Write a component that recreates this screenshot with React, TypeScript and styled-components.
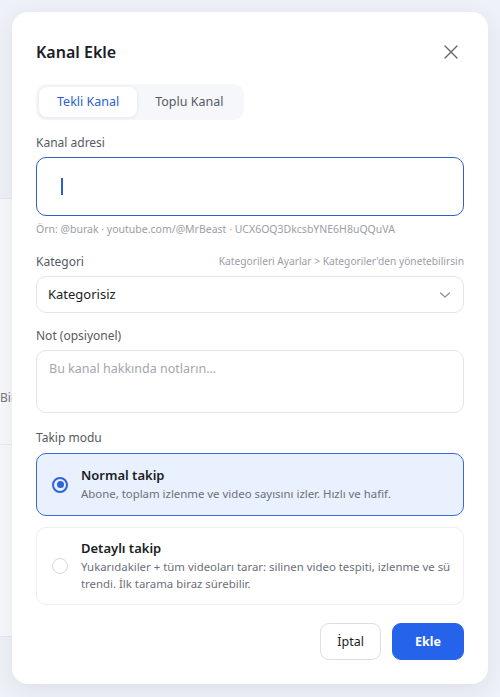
import React from 'react';
import styled, { createGlobalStyle } from 'styled-components';

const GlobalStyle = createGlobalStyle`
  html, body {
    margin: 0;
    padding: 0;
    background: #eef1f7;
    font-family: "Noto Sans", "Open Sans", sans-serif;
    line-height: 1.3;
  }
  #root {
    position: relative;
    width: 500px;
    height: 697px;
    overflow: hidden;
  }
`;

const Page = styled.div`
  padding-top: 198px;
`;

const GhostCard = styled.div`
  width: 300px;
  margin-left: -120px;
  background: #f7f8fb;
  border-top: 1px solid #e6e8ee;
  border-bottom: 1px solid #e6e8ee;
`;

const GhostRow = styled.div<{ $h: number }>`
  height: ${p => p.$h}px;
  box-sizing: border-box;
  border-bottom: 1px solid #e9ebf0;
  padding: 191px 0 0 120px;
  font-size: 12px;
  color: #777;
  &:last-child {
    border-bottom: none;
  }
`;

const Overlay = styled.div`
  position: absolute;
  inset: 0;
  padding: 12px;
  display: flex;
  align-items: flex-start;
`;

const Modal = styled.div`
  width: 476px;
  box-sizing: border-box;
  background: #fff;
  border-radius: 16px;
  box-shadow: 0 6px 24px rgba(30, 40, 80, 0.08);
  padding: 24px;
  display: flex;
  flex-direction: column;
`;

const Header = styled.div`
  display: flex;
  align-items: center;
  justify-content: space-between;
  height: 32px;
`;

const Title = styled.h2`
  margin: 0;
  font-size: 16px;
  font-weight: 600;
  color: #1a1d24;
`;

const CloseButton = styled.button`
  border: none;
  background: none;
  padding: 0;
  width: 20px;
  height: 20px;
  display: flex;
  align-items: center;
  justify-content: center;
  margin-right: 3px;
`;

const Tabs = styled.div`
  margin-top: 16px;
  align-self: flex-start;
  display: flex;
  padding: 3px;
  background: #f5f7fb;
  border-radius: 10px;
`;

const Tab = styled.div<{ $active?: boolean }>`
  height: 30px;
  padding: 0 18px;
  display: flex;
  align-items: center;
  font-size: 12.5px;
  border-radius: 8px;
  color: ${p => (p.$active ? '#2b5fd0' : '#555a63')};
  background: ${p => (p.$active ? '#fff' : 'transparent')};
  box-shadow: ${p => (p.$active ? '0 1px 4px rgba(20,30,60,0.08)' : 'none')};
`;

const Field = styled.div<{ $top: number }>`
  margin-top: ${p => p.$top}px;
  display: flex;
  flex-direction: column;
`;

const LabelRow = styled.div<{ $gap?: number }>`
  display: flex;
  justify-content: space-between;
  align-items: center;
  height: 16px;
  margin-bottom: ${p => p.$gap ?? 6}px;
`;

const Label = styled.label`
  font-size: 12px;
  color: #555a63;
`;

const SideHint = styled.span`
  font-size: 10.2px;
  color: #9a9ea6;
`;

const AddressBox = styled.div`
  height: 59px;
  box-sizing: border-box;
  border: 1px solid #2f62c9;
  border-radius: 10px;
  display: flex;
  align-items: center;
  padding-left: 24px;
`;

const Caret = styled.span`
  width: 1.5px;
  height: 17px;
  background: #2b5fd0;
`;

const Hint = styled.div`
  margin-top: 7px;
  height: 14px;
  font-size: 10.5px;
  color: #9a9ea6;
`;

const SelectBox = styled.div`
  height: 37px;
  box-sizing: border-box;
  border: 1px solid #e3e5ea;
  border-radius: 10px;
  display: flex;
  align-items: center;
  justify-content: space-between;
  padding: 0 12px 0 11px;
  font-size: 13px;
  color: #1a1d24;
`;

const NoteBox = styled.div`
  height: 63px;
  box-sizing: border-box;
  border: 1px solid #e3e5ea;
  border-radius: 10px;
  padding: 10px 12px;
  font-size: 12.5px;
  color: #a3a7ae;
`;

const Options = styled.div`
  display: flex;
  flex-direction: column;
  gap: 11px;
`;

const Option = styled.div<{ $selected?: boolean; $h: number }>`
  height: ${p => p.$h}px;
  box-sizing: border-box;
  border: 1px solid ${p => (p.$selected ? '#3a6ad8' : '#eceef2')};
  background: ${p => (p.$selected ? '#eaf1fe' : '#fff')};
  border-radius: 10px;
  display: flex;
  align-items: center;
  gap: 13px;
  padding: 0 12px 0 15px;
`;

const Radio = styled.span<{ $checked?: boolean }>`
  flex: none;
  width: 16px;
  height: 16px;
  box-sizing: border-box;
  border-radius: 50%;
  border: ${p => (p.$checked ? '2px solid #2b63e0' : '1.5px solid #d4d7dd')};
  display: flex;
  align-items: center;
  justify-content: center;
  &::after {
    content: '';
    display: ${p => (p.$checked ? 'block' : 'none')};
    width: 7px;
    height: 7px;
    border-radius: 50%;
    background: #2b63e0;
  }
`;

const OptionText = styled.div`
  display: flex;
  flex-direction: column;
  min-width: 0;
`;

const OptionTitle = styled.div`
  font-size: 13px;
  font-weight: 600;
  color: #1a1d24;
  margin-bottom: 1px;
`;

const OptionDesc = styled.div`
  font-size: 11.4px;
  line-height: 17px;
  color: #6b7079;
  white-space: pre;
  overflow: hidden;
`;

const Footer = styled.div`
  margin-top: 18px;
  display: flex;
  justify-content: flex-end;
  gap: 11px;
`;

const Button = styled.button<{ $primary?: boolean }>`
  height: 37px;
  box-sizing: border-box;
  border-radius: 9px;
  font-family: inherit;
  font-size: 12.5px;
  padding: 0 ${p => (p.$primary ? 22 : 16)}px;
  border: 1px solid ${p => (p.$primary ? '#2563eb' : '#dcdfe4')};
  background: ${p => (p.$primary ? '#2563eb' : '#fff')};
  color: ${p => (p.$primary ? '#fff' : '#1a1d24')};
  font-weight: ${p => (p.$primary ? 700 : 400)};
`;

export default function App() {
  return (
    <>
      <GlobalStyle />
      <Page>
        <GhostCard>
          <GhostRow $h={246}>Bir</GhostRow>
          <GhostRow $h={100} />
        </GhostCard>
      </Page>
      <Overlay>
        <Modal>
          <Header>
            <Title>Kanal Ekle</Title>
            <CloseButton aria-label="Kapat">
              <svg width="14" height="14" viewBox="0 0 14 14" fill="none" stroke="#666" strokeWidth="1.4" strokeLinecap="round">
                <path d="M1 1L13 13M13 1L1 13" />
              </svg>
            </CloseButton>
          </Header>

          <Tabs>
            <Tab $active>Tekli Kanal</Tab>
            <Tab>Toplu Kanal</Tab>
          </Tabs>

          <Field $top={15}>
            <LabelRow>
              <Label>Kanal adresi</Label>
            </LabelRow>
            <AddressBox>
              <Caret />
            </AddressBox>
            <Hint>Örn: @burak · youtube.com/@MrBeast · UCX6OQ3DkcsbYNE6H8uQQuVA</Hint>
          </Field>

          <Field $top={17}>
            <LabelRow>
              <Label>Kategori</Label>
              <SideHint>Kategorileri Ayarlar &gt; Kategoriler'den yönetebilirsin</SideHint>
            </LabelRow>
            <SelectBox>
              <span>Kategorisiz</span>
              <svg width="12" height="8" viewBox="0 0 12 8" fill="none" stroke="#8a8f98" strokeWidth="1.2" strokeLinecap="round" strokeLinejoin="round">
                <path d="M1.5 2L6 6L10.5 2" />
              </svg>
            </SelectBox>
          </Field>

          <Field $top={15}>
            <LabelRow>
              <Label>Not (opsiyonel)</Label>
            </LabelRow>
            <NoteBox>Bu kanal hakkında notların...</NoteBox>
          </Field>

          <Field $top={17}>
            <LabelRow $gap={7}>
              <Label>Takip modu</Label>
            </LabelRow>
            <Options>
              <Option $selected $h={63}>
                <Radio $checked />
                <OptionText>
                  <OptionTitle>Normal takip</OptionTitle>
                  <OptionDesc>Abone, toplam izlenme ve video sayısını izler. Hızlı ve hafif.</OptionDesc>
                </OptionText>
              </Option>
              <Option $h={78}>
                <Radio />
                <OptionText>
                  <OptionTitle>Detaylı takip</OptionTitle>
                  <OptionDesc>{'Yukarıdakiler + tüm videoları tarar: silinen video tespiti, izlenme ve süre\ntrendi. İlk tarama biraz sürebilir.'}</OptionDesc>
                </OptionText>
              </Option>
            </Options>
          </Field>

          <Footer>
            <Button>İptal</Button>
            <Button $primary>Ekle</Button>
          </Footer>
        </Modal>
      </Overlay>
    </>
  );
}
